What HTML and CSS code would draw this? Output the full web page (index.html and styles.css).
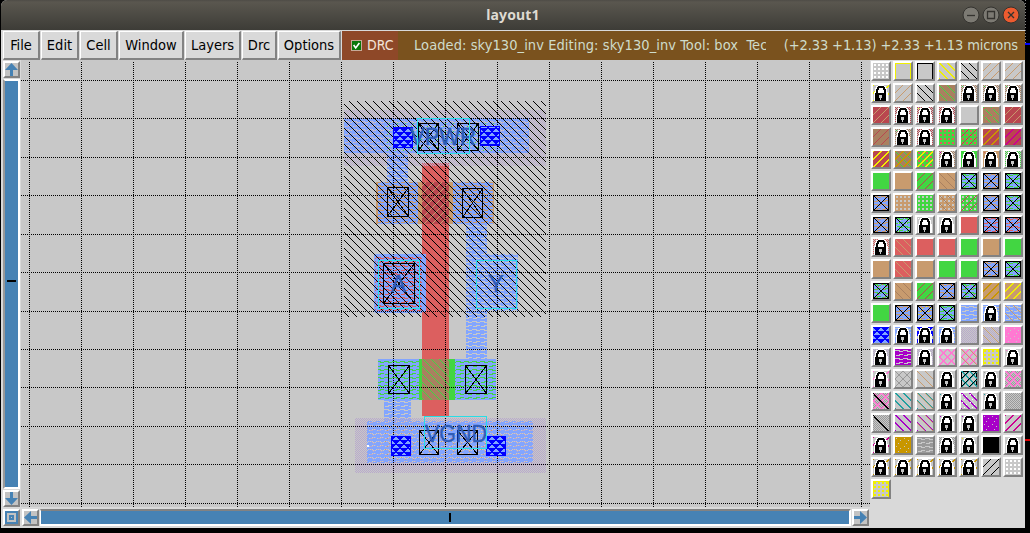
FILE: index.html
```html
<!DOCTYPE html>
<html lang="en">
<head>
<meta charset="utf-8">
<title>layout1</title>
<link rel="stylesheet" href="styles.css">
</head>
<body>
<div class="window">
  <header class="titlebar">
    <span class="title">layout1</span>
    <div class="controls">
      <svg class="ctl" viewBox="0 0 18 18"><circle cx="9" cy="9" r="8"/><path d="M5 9.5h8"/></svg>
      <svg class="ctl" viewBox="0 0 18 18"><circle cx="9" cy="9" r="8"/><path d="M5.5 5.5h7v7h-7z"/></svg>
      <svg class="ctl close" viewBox="0 0 18 18"><circle cx="9" cy="9" r="8"/><path d="M6 6l6 6M12 6l-6 6"/></svg>
    </div>
  </header>
  <nav class="menubar">
    <button class="menu w-file">File</button><button class="menu w-edit">Edit</button><button class="menu w-cell">Cell</button><button class="menu w-window">Window</button><button class="menu w-layers">Layers</button><button class="menu w-drc">Drc</button><button class="menu w-options">Options</button>
    <div class="drc"><svg class="check" viewBox="0 0 11 11"><path d="M2 5l2.5 3.5L9 2.5"/></svg><span>DRC</span></div>
    <div class="status"><span class="loaded">Loaded: sky130_inv Editing: sky130_inv Tool: box&nbsp; Tec</span><span class="coords">(+2.33 +1.13) +2.33 +1.13 microns</span></div>
  </nav>
  <main class="body">
    <section class="editor">
      <div class="vscroll">
        <svg class="btn" viewBox="0 0 13 13"><path d="M6.5 0L13 7H8v6H5V7H0z"/></svg>
        <div class="track vtrack"><i class="mark-v"></i></div>
        <svg class="btn" viewBox="0 0 13 13"><path d="M6.5 13L13 6H8V0H5v6H0z"/></svg>
      </div>
      <svg class="canvas" viewBox="21 60 849 447" id="canvas"></svg>
      <svg class="btn home" viewBox="0 0 13 13"><path fill-rule="evenodd" d="M0 0h13v13H0zM2 2v9h9V2zM4 4h5v5H4zM6 6v1h1V6z"/></svg>
      <div class="hscroll">
        <svg class="btn" viewBox="0 0 13 13"><path d="M0 6.5L7 0v5h6v3H7v5z"/></svg>
        <div class="track htrack"><i class="mark-h"></i></div>
        <svg class="btn" viewBox="0 0 13 13"><path d="M13 6.5L6 0v5H0v3h6v5z"/></svg>
      </div>
    </section>
    <aside class="palette" id="palette"></aside>
  </main>
</div>
<div class="desk"><i class="dots"></i><i class="blue"></i><i class="red"></i></div>
<script src="app.js"></script>
</body>
</html>
```

FILE: styles.css
```css
* { box-sizing: border-box; }
body { margin: 0; width: 1030px; height: 533px; overflow: hidden; background: #000; display: flex; padding-left: 1px; font-family: "DejaVu Sans Condensed", "DejaVu Sans", sans-serif; }
.window { width: 1024px; height: 528px; background: #d9d9d9; border-radius: 6px 6px 0 0; overflow: hidden; flex: none; }
.titlebar { height: 30px; background: linear-gradient(#4e4c46, #5a574f 2px, #3d3c37); display: grid; grid-template-columns: 1fr auto; align-items: center; }
.title { text-align: center; color: #dfdbd2; font: bold 14px "Noto Sans", sans-serif; letter-spacing: .15px; padding: 0 0 2px 63px; }
.controls { display: flex; gap: 2px; padding-right: 5px; }
.ctl { width: 18px; height: 18px; fill: #7c7a73; stroke: #34332f; stroke-width: 1; }
.ctl path { fill: none; stroke-width: 1.3; }
.close { fill: #ed5b2f; }
.menubar { height: 30px; padding: 1px 0 0 2px; display: flex; background: #d9d9d9; }
.menu { height: 29px; padding: 0 0 1px; margin: 0 1px 0 0; border: 1px solid #fff; border-right: 2px solid #828282; border-bottom: 2px solid #828282; background: #d9d9d9; color: #000; font: 14.5px "DejaVu Sans Condensed", "DejaVu Sans", sans-serif; font-stretch: condensed; flex: none; }
.w-file { width: 37px; } .w-edit { width: 38px; } .w-cell { width: 38px; } .w-window { width: 65px; } .w-layers { width: 56px; } .w-drc { width: 35px; } .w-options { width: 63px; }
.drc { width: 56px; flex: none; background: #8e4828; color: #f3e4d8; display: flex; align-items: center; gap: 5px; padding: 0 0 1px 9px; font-size: 14px; font-stretch: condensed; }
.check { width: 11px; height: 11px; background: #087708; border: 1px solid #c7aa98; flex: none; }
.check path { fill: none; stroke: #fff; stroke-width: 2; }
.status { flex: 1; min-width: 0; background: #7a521e; display: flex; justify-content: space-between; align-items: center; padding: 0 7px 1px 16px; font-size: 14.5px; font-stretch: condensed; color: #cfdccb; white-space: pre; }
.loaded { width: 352px; overflow: hidden; letter-spacing: .07px; }
.coords { letter-spacing: -.12px; }
.body { display: flex; height: 468px; }
.editor { width: 869px; display: grid; grid-template: 447px 21px / 20px 849px; flex: none; }
.vscroll { display: flex; flex-direction: column; align-items: flex-start; padding: 1px 0 0 2px; gap: 1px; }
.btn { width: 17px; height: 17px; padding: 0; border: 2px solid #fff; border-right-color: #828282; border-bottom-color: #828282; background: #c3c3c3; fill: #4682b4; flex: none; }
.track { background: #4682b4; border: 2px solid #fff; display: flex; align-items: center; justify-content: center; }
.vtrack { width: 17px; flex: 1; border-left-color: #999; padding-bottom: 6px; }
.htrack { height: 17px; flex: 1; border-top-color: #828282; border-left-width: 1px; padding-left: 10px; }
.mark-v { width: 9px; height: 2px; background: #000; }
.mark-h { width: 2px; height: 9px; background: #000; }
.home { margin: 2px 0 0 2px; }
.hscroll { display: flex; gap: 1px; padding: 2px 1px 2px 1px; height: 21px; }
.canvas { width: 849px; height: 447px; background: #c8c8c8; display: block; shape-rendering: crispEdges; }
.label { font: 24px "Liberation Sans", Arial, sans-serif; fill: #2e5cb8; stroke: #2e5cb8; stroke-width: .4; }
.palette { width: 155px; padding: 1px 0 0 1px; display: grid; grid-template-columns: repeat(7, 20px); grid-auto-rows: 20px; gap: 2px; align-content: start; }
.cell { width: 20px; height: 20px; border: 2px solid #fff; border-right-color: #828282; border-bottom-color: #828282; background: #c8c8c8; shape-rendering: crispEdges; display: block; }
.desk { flex: 1; display: flex; flex-direction: column; height: 528px; }
.dots { width: 1px; height: 43px; background: repeating-linear-gradient(#888 0 1px, #000 1px 3px); }
.blue { height: 2px; background: #00f; }
.red { height: 2px; margin-top: 394px; background: #d00; }
```

FILE: app.js
```js
const C = { G:'#42d642', T:'#c89b6e', R:'#dc5f5f', D:'#b9464f', B:'#a98060', U:'#82a5ff', Y:'#f0f000', K:'#000', W:'#fff',
  L:'#b8a9cc', P:'#ff78d2', V:'#a800c8', M:'#cc0090', A:'#999', S:'#22a0a0', O:'#c89600', N:'#0000ff', g:'#c8c8c8' };
const r = (x,y,w,h,f) => `<rect x="${x}" y="${y}" width="${w}" height="${h}" fill="${f}"/>`;
const px = (fn, n) => { let s=''; for (let i=0;i<n;i++) s+=fn(i); return s; };
const wide = 'YOMSVP';

// Stipple styles, each a tile of unit pixels
const tiles = {
  d: [8, px(i=>`M${i} ${i}h1v1h-1z`,8)],
  s: [8, px(i=>`M${7-i} ${i}h1v1h-1z`,8)],
  p: [4, 'M1 1h2v2h-2z'],
  c: [2, 'M0 0h1v1h-1zM1 1h1v1h-1z'],
  w: [8, 'M0 0h8v1h-8zM5 1h3v1h-3zM0 2h4v1h-4zM0 3h8v2h-8zM0 5h4v1h-4zM0 6h1v1h-1zM5 6h3v1h-3zM0 7h8v1h-8z'],
  t: [8, 'M0 0h8v1h-8zM1 1h6v1h-6zM2 2h4v1h-4zM3 3h2v1h-2zM0 4h8v1h-8zM0 5h3v1h-3zM5 5h3v1h-3zM0 6h2v1h-2zM6 6h2v1h-2zM0 7h1v1h-1zM7 7h1v1h-1z'],
  f: [8, 'M1 1h1v1h-1zM5 3h1v1h-1zM3 6h1v1h-1z']
};
const diag = {
  d: px(i=>`M${i} ${i}h1v1h-1zM${(i+1)%8} ${i}h1v1h-1z`,8),
  s: px(i=>`M${7-i} ${i}h1v1h-1zM${(8-i)%8} ${i}h1v1h-1z`,8)
};
let defs = '';
for (const [k,[n,p]] of Object.entries(tiles)) for (const c in C)
  defs += `<pattern id="${k}${c}" width="${n}" height="${n}" patternUnits="userSpaceOnUse"><path fill="${C[c]}" d="${diag[k] && wide.includes(c) ? diag[k] : p}"/></pattern>`;
const F = (x,y,x2,y2,...fs) => fs.map(f => r(x,y,x2-x,y2-y, f.length===1 ? C[f] : `url(#${f})`)).join('');
const box = (x,y,x2,y2,c,w=1) => `<rect x="${x+w/2}" y="${y+w/2}" width="${x2-x-w}" height="${y2-y-w}" fill="none" stroke="${c}" stroke-width="${w}"/>`;
const via = (x,y,x2,y2) => box(x,y,x2,y2,'#000') + `<path d="M${x} ${y}L${x2} ${y2}M${x2} ${y}L${x} ${y2}" stroke="#000"/>`;
const metal = (x,y,x2,y2) => F(x,y,x2,y2,'U','tN') + box(x,y,x2,y2,'#0000ff');
const label = (x,y,w,t) => `<text class="label" x="${x}" y="${y}" textLength="${w}" lengthAdjust="spacingAndGlyphs">${t}</text>`;

let s = `<defs>${defs}</defs>`;
s += F(422,163,449,416,'R') + F(376,182,494,224,'T') + F(422,182,449,224,'D','sT');
s += F(344,110,546,166,'cL') + F(344,118,529,153,'wU','fL') + F(385,120,501,153,'fG');
s += F(387,153,408,182,'wU') + F(378,182,418,224,'wU') + F(453,182,493,224,'wU');
s += F(466,224,487,359,'wU') + F(374,254,426,312,'U') + F(375,256,422,313,'R','wU') + F(466,254,518,311,'wU');
s += F(378,359,496,400,'G') + F(378,359,419,400,'wU') + F(455,359,496,400,'wU') + F(422,359,449,400,'B','dG');
s += F(384,400,411,421,'wU') + F(355,418,546,473,'cL') + F(367,421,533,463,'wU','fL') + F(385,425,504,462,'fT') + r(367,445,2,2,'#fff');
s += F(344,101,546,317,'dK');
for (const x of [29,81,133,185,237,289,341,393,445,497,549,601,653,705,757,809,861])
  s += `<path d="M${x+.5} 62V507" stroke="#000" stroke-dasharray="1 1"/>`;
for (const y of [80,118,157,195,234,272,311,349,387,426,464,503])
  s += `<path d="M21 ${y+.5}H870" stroke="#000" stroke-dasharray="1 1"/>`;
s += metal(393,127,413,148) + metal(480,126,500,146) + metal(391,436,411,456) + metal(486,436,506,456);
for (const b of [[418,123,439,151],[457,123,479,151],[387,187,409,217],[462,188,483,218],[383,263,415,304],[388,365,410,394],[465,365,487,394],[419,430,439,455],[457,430,478,455]]) s += via(...b);
s += label(410,145,66,'VPWR') + label(391,292,15,'A') + label(488,292,16,'Y') + label(425,442,62,'VGND');
s += box(417,118,470,154,'#28dce6') + box(378,260,420,309,'#28dce6') + box(476,260,517,309,'#28dce6') + box(424,416,487,449,'#28dce6');
document.getElementById('canvas').innerHTML = s;

// Layer buttons: fill styles in paint order; X = contact, # = locked, + / = outlines
const rows = [
  'pW +Y +K dY dK sT sT',
  'sY,# sT dK B,dG cB,fG,# cB,fG,# cB,fG,#',
  'D,sT cD,# cD,fY,# cD,# g B,dG,fR D,sT',
  'B,sD cB,fG,# cD,# G,pR G,pR,sD D,sO D,sM',
  'D,sY B,dG,sO G,pR,sY cB,fM,# G,# T,fR,# cG,#',
  'G T G,sD T,dB G,wU,X T,wU,X G,wU,X',
  'T,wU,X T,pg G,pg T,pg,dB G,pg,sD T,wU,X G,wU,fT,X',
  'T,wU,fT,X G,wU,fg,X fW,# # R R,wU,X R,wU,fT,X',
  'cR,# R,dT R R G T G',
  'T R,dT T G G T,wU,X G,wU,X',
  'G,wU,fR,X T,dB G,sD T,wU,X G,wU,fR,X T,sO T,sY',
  'G T,wU,X T,wU,fY,X G,wU,X wU wU,# wU,dT',
  'U,tN wU,# tN,# wU,# cL cL,dT P,fg',
  'cL,# wV cL,# dP,sP dP,sP,dT pY,+Y fP,#',
  'sP,# dA,sA dA,dT # +K,sS,dS,sK fA,# cA,sP,dP',
  'cA,sP,dP,1 dS dS,dT fS,# dV,fW fS,# cA',
  'cA,1 dV dV,dT fV,# fV,# V,fM,fg sM',
  'sM,# O,fM,fg wA cA,# fY,# K #',
  'sO,# sO,# sO,# sO,# sO,# sK pW',
  'pY,+Y'
];
const lock = '<path fill="#fff" d="M5 0h6v1h2v2h1v4h1v9H1V7h1V3h1V1h2z"/><path fill="#000" d="M5 1h6v1h1v2h1v4h-2V5h-1V3H6v2H5v3H3V4h1V2h1zM2 8h11v8H2z"/><path fill="#c8c8c8" d="M6 10h3v3H8v2H7v-2H6z"/>';
document.getElementById('palette').innerHTML = rows.join(' ').split(' ').map(t => {
  let g = '';
  for (const k of t.split(',')) {
    if (k === '#') g += lock;
    else if (k === 'X') g += via(0,0,16,16);
    else if (k === '1') g += '<path d="M0 0L16 16" stroke="#000" stroke-width="1.4"/>';
    else if (k[0] === '+') g += `<path d="M.5 16V.5h15V16" fill="none" stroke="${C[k[1]]}"/>`;
    else g += F(0,0,16,16,k);
  }
  return `<svg class="cell" viewBox="0 0 16 16">${g}</svg>`;
}).join('');
```
